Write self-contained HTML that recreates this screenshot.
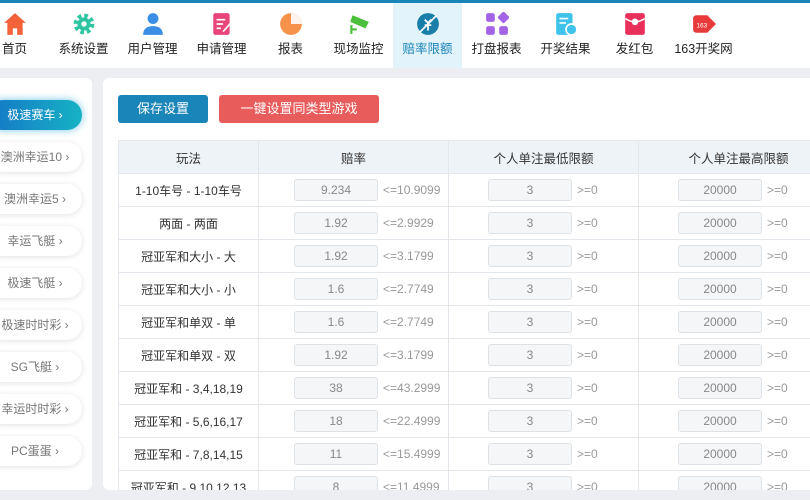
<!DOCTYPE html>
<html><head><meta charset="utf-8"><style>
*{margin:0;padding:0;box-sizing:border-box}
body{width:810px;height:500px;overflow:hidden;background:#eceef2;font-family:"Liberation Sans","Noto Sans CJK SC",sans-serif;position:relative}
.top{position:absolute;left:0;top:0;width:810px;height:68px;background:#fff;border-top:3px solid #1a85b8}
.nav{position:absolute;top:0;width:69px;height:65px;text-align:center}
.nav.act{background:#e3f3fb}
.nav svg{position:absolute;left:23px;top:9px}
.nav span{position:absolute;left:0;right:0;top:35px;font-size:12.5px;color:#222;white-space:nowrap}
.nav.act span{color:#1a85b8}
.side{position:absolute;left:0;top:78px;width:92px;height:412px;background:#fff;border-radius:0 6px 6px 0}
.pill{position:absolute;left:-12px;width:94px;height:30px;border-radius:15px;background:#fff;box-shadow:0 1px 6px rgba(0,0,0,.12);font-size:12px;color:#777;text-align:center;line-height:30px;white-space:nowrap}
.pill.a{background:linear-gradient(90deg,#1577c7,#16b2c4);color:#fff;box-shadow:0 0 8px rgba(20,160,210,.6)}
.main{position:absolute;left:103px;top:78px;width:707px;height:412px;background:#fff;border-radius:6px 0 0 6px;overflow:hidden}
.btn{position:absolute;top:17px;height:28px;border-radius:3px;color:#fff;font-size:13px;line-height:28px;text-align:center}
table{position:absolute;left:15px;top:62px;border-collapse:collapse;font-size:12px;color:#333;table-layout:fixed;width:720px}
td,th{border:1px solid #e3e6ea;height:33px;text-align:center;font-weight:normal;white-space:nowrap}
th{background:#eef3f7;height:33px;font-size:12.5px}
.c{position:relative}
.in{position:absolute;top:5px;width:84px;height:22px;border:1px solid #dde2e6;border-radius:3px;background:#f4f6f8;color:#888;line-height:20px;text-align:center}
.lab{position:absolute;top:9px;color:#999;font-size:12px}
</style></head><body>
<div class="top">
<div class="nav" style="left:-20px"><svg width="24" height="24" viewBox="0 0 22 22"><path d="M11 1L1 10h3v11h5v-6h4v6h5V10h3z" fill="#f4623a"/></svg><span>首页</span></div>
<div class="nav" style="left:49px"><svg width="24" height="24" viewBox="0 0 22 22"><circle cx="11" cy="11" r="7" fill="none" stroke="#2ec4a0" stroke-width="5" stroke-dasharray="3 2.5"/><circle cx="11" cy="11" r="6" fill="#2ec4a0"/><circle cx="11" cy="11" r="2.5" fill="#fff"/></svg><span>系统设置</span></div>
<div class="nav" style="left:118px"><svg width="24" height="24" viewBox="0 0 22 22"><circle cx="11" cy="6" r="5" fill="#3a8ee6"/><path d="M2 21c0-6 4-8 9-8s9 2 9 8z" fill="#3a8ee6"/></svg><span>用户管理</span></div>
<div class="nav" style="left:187px"><svg width="24" height="24" viewBox="0 0 22 22"><rect x="3" y="1" width="15" height="20" rx="2" fill="#e8457a"/><path d="M6 7h8M6 11h6M6 15h4" stroke="#fff" stroke-width="1.5"/><path d="M12 18l7-8" stroke="#fff" stroke-width="1.5"/></svg><span>申请管理</span></div>
<div class="nav" style="left:256px"><svg width="24" height="24" viewBox="0 0 22 22"><circle cx="11" cy="11" r="10" fill="#f7924a"/><path d="M11 11V1A10 10 0 0 1 21 11z" fill="#fff" opacity=".9"/></svg><span>报表</span></div>
<div class="nav" style="left:324px"><svg width="24" height="24" viewBox="0 0 22 22"><path d="M5 3l15 6-3 6L3 9z" fill="#4cbf3c"/><path d="M4 12v8M4 16h5" stroke="#4cbf3c" stroke-width="2"/></svg><span>现场监控</span></div>
<div class="nav act" style="left:393px"><svg width="24" height="24" viewBox="0 0 22 22"><circle cx="11" cy="11" r="10" fill="#1a7fa8"/><path d="M3 19L19 3M8 7l3 3 3-3M11 10v7M8 12h6" stroke="#fff" stroke-width="1.6" fill="none"/></svg><span>赔率限额</span></div>
<div class="nav" style="left:462px"><svg width="24" height="24" viewBox="0 0 22 22" fill="#a365e6"><rect x="1" y="1" width="8" height="8" rx="2"/><rect x="13" y="1" width="8" height="8" rx="1" transform="rotate(45 17 5)"/><rect x="1" y="13" width="8" height="8" rx="2"/><rect x="13" y="13" width="8" height="8" rx="2"/></svg><span>打盘报表</span></div>
<div class="nav" style="left:531px"><svg width="24" height="24" viewBox="0 0 22 22"><rect x="2" y="1" width="15" height="20" rx="2" fill="#3fc3ea"/><path d="M5 6h8M5 10h6" stroke="#fff" stroke-width="1.5"/><circle cx="16" cy="16" r="5" fill="#3fc3ea" stroke="#fff" stroke-width="1.5"/></svg><span>开奖结果</span></div>
<div class="nav" style="left:600px"><svg width="24" height="24" viewBox="0 0 22 22"><rect x="2" y="1" width="18" height="20" rx="2" fill="#e8305a"/><path d="M2 6q9 6 18 0" stroke="#fff" stroke-width="1.4" fill="none"/><circle cx="11" cy="9" r="3" fill="#fff"/></svg><span>发红包</span></div>
<div class="nav" style="left:669px"><svg width="24" height="24" viewBox="0 0 22 22"><path d="M4 3h10l8 8-8 8H4a3 3 0 0 1-3-3V6a3 3 0 0 1 3-3z" fill="#e83a3a"/><text x="4" y="14" font-size="6" fill="#fff" font-family="Liberation Sans">163</text></svg><span>163开奖网</span></div>
</div>
<div class="side">
<div class="pill a" style="top:22px">极速赛车 ›</div>
<div class="pill" style="top:64px">澳洲幸运10 ›</div>
<div class="pill" style="top:106px">澳洲幸运5 ›</div>
<div class="pill" style="top:148px">幸运飞艇 ›</div>
<div class="pill" style="top:190px">极速飞艇 ›</div>
<div class="pill" style="top:232px">极速时时彩 ›</div>
<div class="pill" style="top:274px">SG飞艇 ›</div>
<div class="pill" style="top:316px">幸运时时彩 ›</div>
<div class="pill" style="top:358px">PC蛋蛋 ›</div>
</div>
<div class="main">
<div class="btn" style="left:15px;width:90px;background:#1a85b8">保存设置</div>
<div class="btn" style="left:116px;width:160px;background:#e85c5c">一键设置同类型游戏</div>
<table>
<colgroup><col style="width:140px"><col style="width:190px"><col style="width:190px"><col style="width:200px"></colgroup>
<tr><th>玩法</th><th>赔率</th><th>个人单注最低限额</th><th>个人单注最高限额</th></tr>
<tr><td>1-10车号 - 1-10车号</td><td class="c"><div class="in" style="left:35px">9.234</div><div class="lab" style="left:124px">&lt;=10.9099</div></td><td class="c"><div class="in" style="left:39px">3</div><div class="lab" style="left:128px">&gt;=0</div></td><td class="c"><div class="in" style="left:39px">20000</div><div class="lab" style="left:128px">&gt;=0</div></td></tr>
<tr><td>两面 - 两面</td><td class="c"><div class="in" style="left:35px">1.92</div><div class="lab" style="left:124px">&lt;=2.9929</div></td><td class="c"><div class="in" style="left:39px">3</div><div class="lab" style="left:128px">&gt;=0</div></td><td class="c"><div class="in" style="left:39px">20000</div><div class="lab" style="left:128px">&gt;=0</div></td></tr>
<tr><td>冠亚军和大小 - 大</td><td class="c"><div class="in" style="left:35px">1.92</div><div class="lab" style="left:124px">&lt;=3.1799</div></td><td class="c"><div class="in" style="left:39px">3</div><div class="lab" style="left:128px">&gt;=0</div></td><td class="c"><div class="in" style="left:39px">20000</div><div class="lab" style="left:128px">&gt;=0</div></td></tr>
<tr><td>冠亚军和大小 - 小</td><td class="c"><div class="in" style="left:35px">1.6</div><div class="lab" style="left:124px">&lt;=2.7749</div></td><td class="c"><div class="in" style="left:39px">3</div><div class="lab" style="left:128px">&gt;=0</div></td><td class="c"><div class="in" style="left:39px">20000</div><div class="lab" style="left:128px">&gt;=0</div></td></tr>
<tr><td>冠亚军和单双 - 单</td><td class="c"><div class="in" style="left:35px">1.6</div><div class="lab" style="left:124px">&lt;=2.7749</div></td><td class="c"><div class="in" style="left:39px">3</div><div class="lab" style="left:128px">&gt;=0</div></td><td class="c"><div class="in" style="left:39px">20000</div><div class="lab" style="left:128px">&gt;=0</div></td></tr>
<tr><td>冠亚军和单双 - 双</td><td class="c"><div class="in" style="left:35px">1.92</div><div class="lab" style="left:124px">&lt;=3.1799</div></td><td class="c"><div class="in" style="left:39px">3</div><div class="lab" style="left:128px">&gt;=0</div></td><td class="c"><div class="in" style="left:39px">20000</div><div class="lab" style="left:128px">&gt;=0</div></td></tr>
<tr><td>冠亚军和 - 3,4,18,19</td><td class="c"><div class="in" style="left:35px">38</div><div class="lab" style="left:124px">&lt;=43.2999</div></td><td class="c"><div class="in" style="left:39px">3</div><div class="lab" style="left:128px">&gt;=0</div></td><td class="c"><div class="in" style="left:39px">20000</div><div class="lab" style="left:128px">&gt;=0</div></td></tr>
<tr><td>冠亚军和 - 5,6,16,17</td><td class="c"><div class="in" style="left:35px">18</div><div class="lab" style="left:124px">&lt;=22.4999</div></td><td class="c"><div class="in" style="left:39px">3</div><div class="lab" style="left:128px">&gt;=0</div></td><td class="c"><div class="in" style="left:39px">20000</div><div class="lab" style="left:128px">&gt;=0</div></td></tr>
<tr><td>冠亚军和 - 7,8,14,15</td><td class="c"><div class="in" style="left:35px">11</div><div class="lab" style="left:124px">&lt;=15.4999</div></td><td class="c"><div class="in" style="left:39px">3</div><div class="lab" style="left:128px">&gt;=0</div></td><td class="c"><div class="in" style="left:39px">20000</div><div class="lab" style="left:128px">&gt;=0</div></td></tr>
<tr><td>冠亚军和 - 9,10,12,13</td><td class="c"><div class="in" style="left:35px">8</div><div class="lab" style="left:124px">&lt;=11.4999</div></td><td class="c"><div class="in" style="left:39px">3</div><div class="lab" style="left:128px">&gt;=0</div></td><td class="c"><div class="in" style="left:39px">20000</div><div class="lab" style="left:128px">&gt;=0</div></td></tr>
</table>
</div>
</body></html>
